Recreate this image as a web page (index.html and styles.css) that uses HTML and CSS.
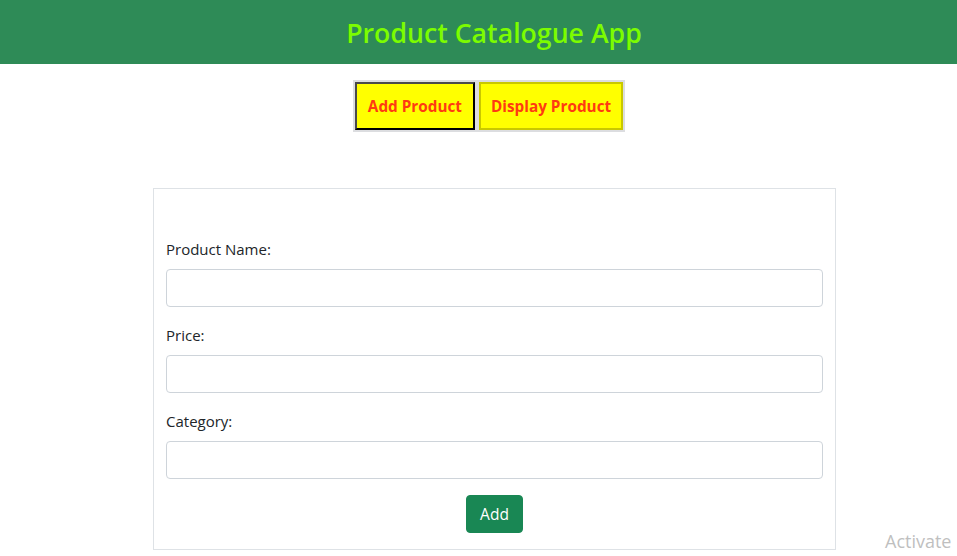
FILE: index.html
```html
<!DOCTYPE html>
<html>
<head>
<meta charset="utf-8">
<link rel="stylesheet" href="styles.css">
</head>
<body>
<div class="page">
  <header class="header"><h1 class="title">Product Catalogue App</h1></header>
  <div class="tabs-row">
    <div class="tabs">
      <button class="tab tab-active">Add Product</button>
      <button class="tab">Display Product</button>
    </div>
  </div>
  <div class="card">
    <form class="form">
      <div class="group">
        <label class="label">Product Name:</label>
        <input class="input" type="text">
      </div>
      <div class="group">
        <label class="label">Price:</label>
        <input class="input" type="text">
      </div>
      <div class="group">
        <label class="label">Category:</label>
        <input class="input" type="text">
      </div>
      <div class="actions"><button type="button" class="add-btn">Add</button></div>
    </form>
  </div>
</div>
<div class="watermark">Activate</div>
</body>
</html>
```
FILE: styles.css
```css
html, body { margin: 0; padding: 0; }
body {
  overflow: hidden;
  width: 957px;
  height: 556px;
  position: relative;
  font-family: "Open Sans", "Noto Sans", sans-serif;
  color: #212529;
  background: #fff;
}
.page { width: 988px; }
.header {
  background: #2e8b57;
  height: 64px;
  box-sizing: border-box;
  padding-top: 2px;
  display: flex;
  align-items: center;
  justify-content: center;
}
.title {
  margin: 0;
  color: #7cfc00;
  font-size: 26.7px;
  font-weight: 600;
  line-height: 1;
}
.tabs-row {
  display: flex;
  justify-content: center;
  margin-top: 16px;
  padding-right: 10px;
}
.tabs {
  display: flex;
  gap: 4px;
  padding: 2px;
  background: #dcdde0;
}
.tab {
  height: 48px;
  padding: 0 10px;
  background: #ffff00;
  color: #ff3a12;
  font-family: "Open Sans", "Noto Sans", sans-serif;
  font-weight: 700;
  font-size: 15.3px;
  border: 2px solid #c9c800;
  box-sizing: border-box;
  margin: 0;
}
.tab-active {
  padding: 0 11px;
  border-color: #4a4a4a #000 #000 #4a4a4a;
}
.card {
  margin: 56px 0 0 153px;
  width: 683px;
  box-sizing: border-box;
  border: 1px solid #dee2e6;
  padding: 48px 12px 16px;
}
.group { margin-bottom: 16px; }
.label {
  display: block;
  font-size: 15px;
  line-height: 24px;
  margin-bottom: 8px;
}
.input {
  display: block;
  width: 100%;
  box-sizing: border-box;
  height: 38px;
  border: 1px solid #ced4da;
  border-radius: 4px;
  margin: 0;
}
.actions { display: flex; justify-content: center; }
.add-btn {
  height: 38px;
  padding: 0 13px;
  background: #198754;
  color: #fff;
  border: 1px solid #198754;
  border-radius: 4px;
  font-family: "Open Sans", "Noto Sans", sans-serif;
  font-size: 15.5px;
}
.watermark {
  position: absolute;
  left: 885px;
  top: 529px;
  font-family: "Open Sans", sans-serif;
  font-size: 18px;
  color: #bfbfbf;
}
```
